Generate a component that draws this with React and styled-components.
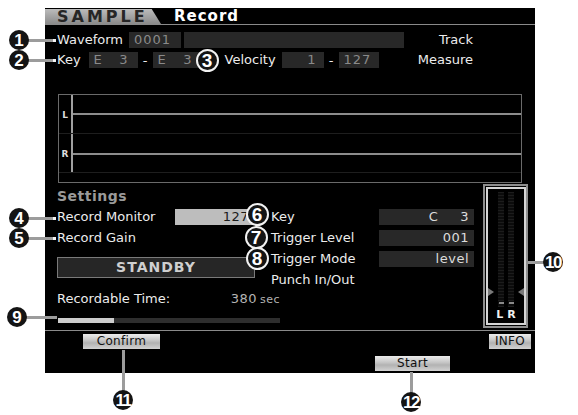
import React from 'react';
import styled, { createGlobalStyle } from 'styled-components';

const GlobalStyle = createGlobalStyle`
  html, body {
    margin: 0;
    padding: 0;
    background: #fff;
  }
  * {
    box-sizing: border-box;
  }
`;

const Stage = styled.div`
  position: relative;
  width: 578px;
  height: 415px;
  padding: 8px 0 0 45px;
  background: #fff;
  font-family: "DejaVu Sans", "Liberation Sans", sans-serif;
`;

const Screen = styled.div`
  width: 490px;
  height: 365px;
  background: #000;
  color: #ececec;
  font-size: 13px;
  display: flex;
  flex-direction: column;
  overflow: hidden;
`;

const Header = styled.div`
  height: 16px;
  display: flex;
  align-items: flex-end;
`;

const Tab = styled.div`
  width: 116px;
  height: 15px;
  padding-left: 12px;
  background: linear-gradient(#bcbcbc, #8a8a8a);
  clip-path: polygon(0 0, 92% 0, 100% 100%, 0 100%);
  color: #262626;
  font-size: 16px;
  font-weight: bold;
  letter-spacing: 3px;
  line-height: 16px;
`;

const Title = styled.div`
  margin-left: 13px;
  color: #fff;
  font-size: 15px;
  font-weight: bold;
  letter-spacing: 1px;
  line-height: 16px;
`;

const Rule = styled.div`
  height: 1px;
  background: #8a8a8a;
  flex-shrink: 0;
`;

const Body = styled.div`
  padding-left: 12px;
  display: flex;
  flex-direction: column;
`;

const Row = styled.div`
  width: 416px;
  height: 16px;
  margin-top: ${p => p.$top}px;
  display: flex;
  align-items: center;
  white-space: nowrap;
`;

const Label = styled.span`
  margin-left: ${p => p.$ml || 0}px;
  margin-right: ${p => p.$gap || 0}px;
  line-height: 16px;
`;

const Spacer = styled.div`
  flex: 1;
`;

const Field = styled.div`
  width: ${p => p.$w}px;
  height: 16px;
  margin-left: ${p => p.$ml || 0}px;
  padding: 0 ${p => p.$pr ?? 5}px 0 5px;
  background: ${p => (p.$light ? '#bdbdbd' : '#282828')};
  color: ${p => (p.$light ? '#1a1a1a' : p.$dim ? '#8a8a8a' : '#dcdcdc')};
  display: flex;
  align-items: center;
  justify-content: ${p => p.$justify || 'flex-start'};
  gap: ${p => p.$gapx || 0}px;
  letter-spacing: ${p => (p.$dim ? 1 : 0.5)}px;
  line-height: 16px;
`;

const Dash = styled.span`
  width: ${p => p.$w}px;
  text-align: center;
`;

const Graph = styled.div`
  width: 464px;
  height: 89px;
  margin: 26px 0 0 1px;
  border: 1px solid #6a6a6a;
  display: flex;
  flex-direction: column;
`;

const Channel = styled.div`
  height: 39px;
  display: flex;
  border-bottom: 1px solid #1e1e1e;
`;

const ChannelName = styled.div`
  width: 12px;
  padding-top: ${p => p.$pad}px;
  text-align: center;
  color: #ddd;
  font-size: 9px;
  font-weight: bold;
`;

const Trace = styled.div`
  flex: 1;
  border-left: 2px solid #a0a0a0;
  background: linear-gradient(
    #000 ${p => p.$at}px,
    #8c8c8c ${p => p.$at}px,
    #8c8c8c ${p => p.$at + 2}px,
    #000 ${p => p.$at + 2}px
  );
`;

const Lower = styled.div`
  height: 147px;
  display: flex;
  align-items: flex-start;
`;

const LowerMain = styled.div`
  width: 438px;
  padding-left: 12px;
  display: flex;
  flex-direction: column;
`;

const Section = styled.div`
  margin-top: 5px;
  height: 16px;
  color: #9a9a9a;
  font-size: 14px;
  font-weight: bold;
  letter-spacing: 0.5px;
  line-height: 16px;
`;

const Columns = styled.div`
  margin-top: 4px;
  display: flex;
`;

const Column = styled.div`
  width: ${p => p.$w}px;
  margin-left: ${p => p.$ml || 0}px;
  display: flex;
  flex-direction: column;
  gap: 4px;
`;

const Line = styled.div`
  height: 17px;
  display: flex;
  align-items: center;
  justify-content: space-between;
  white-space: nowrap;
`;

const Standby = styled.div`
  height: 21px;
  margin-top: 7px;
  border: 1px solid #7a7a7a;
  background: #262626;
  color: #cfcfcf;
  font-size: 14px;
  font-weight: bold;
  letter-spacing: 1px;
  text-align: center;
  line-height: 19px;
`;

const TimeRow = styled.div`
  width: 223px;
  margin-top: 3px;
  height: 16px;
  display: flex;
  justify-content: space-between;
  align-items: center;
  line-height: 16px;
`;

const TimeValue = styled.span`
  color: #b4b4b4;
  letter-spacing: 0.5px;
  small {
    font-size: 11px;
    margin-left: 3px;
  }
`;

const Progress = styled.div`
  width: 222px;
  height: 5px;
  margin: 11px 0 0 1px;
  background: #2e2e2e;
`;

const ProgressFill = styled.div`
  height: 100%;
  background: #cdcdcd;
`;

const Meter = styled.div`
  width: 45px;
  height: 144px;
  margin-top: 1px;
  border: 2px solid #8e8e8e;
  padding: 1px;
  display: flex;
`;

const MeterInner = styled.div`
  flex: 1;
  border: 2px solid #d4d4d4;
  display: flex;
  flex-direction: column;
  align-items: center;
  padding: 3px 0 2px;
`;

const MeterBars = styled.div`
  flex: 1;
  display: flex;
  align-items: flex-end;
  gap: 4px;
`;

const Bar = styled.div`
  width: 6px;
  height: 100%;
  background: repeating-linear-gradient(#1c1c1c 0 1px, #0c0c0c 1px 3px);
  display: flex;
  align-items: flex-end;
  justify-content: center;
`;

const Peak = styled.div`
  width: 5px;
  height: 2px;
  margin-bottom: 3px;
  background: #8a8a8a;
`;

const Marker = styled.div`
  width: 0;
  height: 0;
  margin-bottom: 11px;
  border-top: 4px solid transparent;
  border-bottom: 4px solid transparent;
  ${p => (p.$right ? 'border-right: 6px solid #7a7a7a;' : 'border-left: 6px solid #7a7a7a;')}
`;

const MeterLabels = styled.div`
  margin-top: 2px;
  display: flex;
  gap: 4px;
  color: #f0f0f0;
  font-size: 11px;
  font-weight: bold;
  line-height: 12px;
`;

const Footer = styled.div`
  flex: 1;
  display: flex;
  flex-direction: column;
  padding-top: 3px;
`;

const FooterTop = styled.div`
  display: flex;
  justify-content: space-between;
  padding: 0 4px 0 38px;
`;

const FooterBottom = styled.div`
  margin-top: 7px;
  padding-left: 330px;
`;

const SoftKey = styled.div`
  width: ${p => p.$w}px;
  height: 15px;
  background: linear-gradient(#ececec, #c4c4c4 45%, #b2b2b2 60%, #d2d2d2);
  color: #111;
  font-size: 12px;
  text-align: center;
  line-height: 15px;
  letter-spacing: 0.3px;
`;

const Callout = styled.div`
  position: absolute;
  left: ${p => p.$x - (p.$d || 20) / 2}px;
  top: ${p => p.$y - (p.$d || 20) / 2}px;
  width: ${p => p.$d || 20}px;
  height: ${p => p.$d || 20}px;
  border-radius: 50%;
  background: #141414;
  border: ${p => (p.$ring ? '2px solid #f2f2f2' : 'none')};
  color: #fff;
  font-family: "Liberation Sans", Arial, sans-serif;
  font-size: ${p => (p.$ring ? 19 : 17)}px;
  font-weight: bold;
  letter-spacing: ${p => (p.$wide ? -1.5 : 0)}px;
  display: flex;
  align-items: center;
  justify-content: center;
  line-height: 1;
`;

const Leader = styled.div`
  position: absolute;
  left: ${p => p.$x}px;
  top: ${p => p.$y}px;
  width: ${p => p.$w}px;
  height: ${p => p.$h}px;
  background: #9c9c9c;
`;

const Tip = styled.div`
  position: absolute;
  left: ${p => p.$x}px;
  top: ${p => p.$y}px;
  width: 3px;
  height: 3px;
  background: #f4f4f4;
`;

const sideCallouts = [
  { n: '1', y: 40 },
  { n: '2', y: 60 },
  { n: '4', y: 218 },
  { n: '5', y: 238 },
];

const rightFields = [
  { label: 'Key', value: <><span>C</span><span>3</span></>, gap: 22 },
  { label: 'Trigger Level', value: '001' },
  { label: 'Trigger Mode', value: 'level' },
];

export default function App() {
  return (
    <Stage>
      <GlobalStyle />
      <Screen>
        <Header>
          <Tab>SAMPLE</Tab>
          <Title>Record</Title>
        </Header>
        <Rule />
        <Body>
          <Row $top={7}>
            <Label $gap={6}>Waveform</Label>
            <Field $w={52} $dim>0001</Field>
            <Field $w={220} $ml={3} />
            <Spacer />
            <Label>Track</Label>
          </Row>
          <Row $top={4}>
            <Label $gap={8}>Key</Label>
            <Field $w={49} $dim $justify="space-between" $pr={9}>
              <span>E</span>
              <span>3</span>
            </Field>
            <Dash $w={15}>-</Dash>
            <Field $w={49} $dim $justify="space-between" $pr={9}>
              <span>E</span>
              <span>3</span>
            </Field>
            <Label $ml={23} $gap={6}>Velocity</Label>
            <Field $w={42} $dim $justify="flex-end" $pr={7}>1</Field>
            <Dash $w={15}>-</Dash>
            <Field $w={40} $dim>127</Field>
            <Spacer />
            <Label>Measure</Label>
          </Row>
          <Graph>
            <Channel>
              <ChannelName $pad={15}>L</ChannelName>
              <Trace $at={18} />
            </Channel>
            <Channel>
              <ChannelName $pad={15}>R</ChannelName>
              <Trace $at={19} />
            </Channel>
          </Graph>
        </Body>
        <Lower>
          <LowerMain>
            <Section>Settings</Section>
            <Columns>
              <Column $w={198}>
                <Line>
                  <span>Record Monitor</span>
                  <Field $w={80} $light $justify="flex-end" $pr={6}>127</Field>
                </Line>
                <Line>
                  <span>Record Gain</span>
                </Line>
                <Standby>STANDBY</Standby>
              </Column>
              <Column $w={203} $ml={16}>
                {rightFields.map(f => (
                  <Line key={f.label}>
                    <span>{f.label}</span>
                    <Field $w={95} $justify="flex-end" $gapx={f.gap}>{f.value}</Field>
                  </Line>
                ))}
                <Line>
                  <span>Punch In/Out</span>
                </Line>
              </Column>
            </Columns>
            <TimeRow>
              <span>Recordable Time:</span>
              <TimeValue>380<small>sec</small></TimeValue>
            </TimeRow>
            <Progress>
              <ProgressFill style={{ width: `${(56 / 222) * 100}%` }} />
            </Progress>
          </LowerMain>
          <Meter>
            <MeterInner>
              <MeterBars>
                <Marker />
                <Bar><Peak /></Bar>
                <Bar><Peak /></Bar>
                <Marker $right />
              </MeterBars>
              <MeterLabels>
                <span>L</span>
                <span>R</span>
              </MeterLabels>
            </MeterInner>
          </Meter>
        </Lower>
        <Rule />
        <Footer>
          <FooterTop>
            <SoftKey $w={77}>Confirm</SoftKey>
            <SoftKey $w={42}>INFO</SoftKey>
          </FooterTop>
          <FooterBottom>
            <SoftKey $w={75}>Start</SoftKey>
          </FooterBottom>
        </Footer>
      </Screen>

      {sideCallouts.map(c => (
        <React.Fragment key={c.n}>
          <Leader $x={28} $y={c.y - 1.5} $w={27} $h={3} />
          <Tip $x={53} $y={c.y - 1.5} />
          <Callout $x={19} $y={c.y}>{c.n}</Callout>
        </React.Fragment>
      ))}
      <Leader $x={26} $y={315.5} $w={31} $h={3} />
      <Callout $x={17} $y={317}>9</Callout>
      <Leader $x={528} $y={260.5} $w={18} $h={3} />
      <Callout $x={553} $y={262} $wide>10</Callout>
      <Leader $x={121.5} $y={350} $w={3} $h={42} />
      <Callout $x={123} $y={400} $wide>11</Callout>
      <Leader $x={409.5} $y={372} $w={3} $h={22} />
      <Callout $x={411} $y={402} $wide>12</Callout>

      <Callout $x={207} $y={60} $d={23} $ring>3</Callout>
      <Callout $x={257} $y={214} $d={23} $ring>6</Callout>
      <Callout $x={256} $y={237} $d={23} $ring>7</Callout>
      <Callout $x={257} $y={258} $d={23} $ring>8</Callout>
    </Stage>
  );
}
